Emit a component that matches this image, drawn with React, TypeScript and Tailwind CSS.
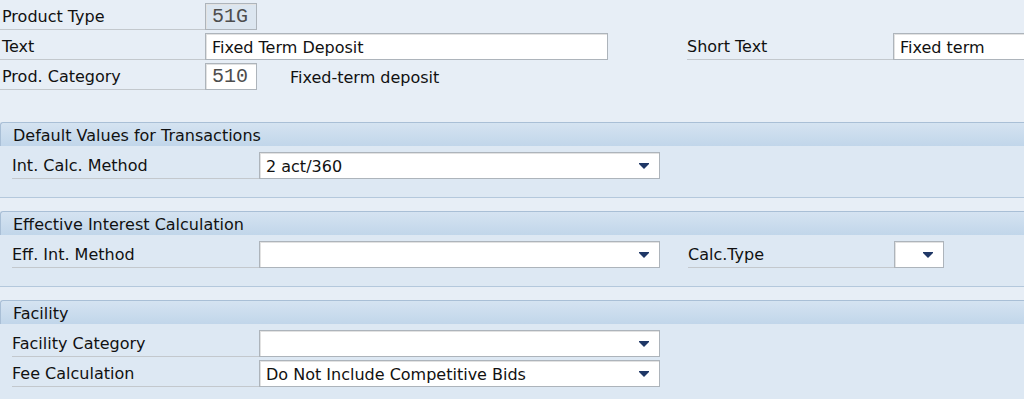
import React from 'react';

const font = { fontFamily: '"DejaVu Sans", Tahoma, Verdana, sans-serif' };

function Arrow() {
  return (
    <svg width="10" height="6" viewBox="0 0 10 6" className="shrink-0">
      <path d="M0 0 H10 V1 L5 6 L0 1 Z" fill="#1f3766" />
    </svg>
  );
}

function Field({ value = '', width, dropdown = false, mono = false, readOnly = false }: {
  value?: string;
  width: string;
  dropdown?: boolean;
  mono?: boolean;
  readOnly?: boolean;
}) {
  return (
    <div
      className={`${width} shrink-0 h-[27px] flex items-center border border-[#adb4bb] shadow-[inset_1px_1px_0_#e2e2e2] ${readOnly ? 'bg-[#dce6f0]' : 'bg-white'} pl-[6px] pr-[10px] overflow-hidden`}
    >
      <span
        className={`flex-1 whitespace-nowrap ${mono ? 'text-[20px] text-[#4d4d4d] leading-none pt-[1px]' : 'text-[16px] text-[#111] pt-[2px]'}`}
        style={mono ? { fontFamily: '"Liberation Mono", "Courier New", monospace' } : undefined}
      >
        {value}
      </span>
      {dropdown && <Arrow />}
    </div>
  );
}

function Label({ text, width, pad = '' }: { text: string; width: string; pad?: string }) {
  return (
    <div className={`${width} ${pad} shrink-0 h-[30px] flex items-center pt-[5px] border-b border-[#c3c8cd] text-[16px] text-[#111] whitespace-nowrap`}>
      {text}
    </div>
  );
}

function Section({ title, children }: { title: string; children: React.ReactNode }) {
  return (
    <div className="mb-[13px]">
      <div className="h-[24px] flex items-center pl-[12px] pt-[2px] border-t border-l border-[#a9bfd6] rounded-tl-[3px] bg-gradient-to-b from-[#d5e3f1] to-[#c1d6ea] text-[16px] text-[#111]">
        {title}
      </div>
      <div className="bg-[#dde8f3] border-b border-[#b4c8dc] pt-[3px] pb-[18px] flex flex-col">
        {children}
      </div>
    </div>
  );
}

export default function App() {
  return (
    <div className="w-[1024px] h-[399px] overflow-hidden bg-[#e7eef6]" style={font}>
      {/* header fields */}
      <div className="flex flex-col">
        <div className="flex items-end h-[30px]">
          <Label text="Product Type" width="w-[205px]" pad="pl-[2px]" />
          <Field value="51G" width="w-[52px]" mono readOnly />
        </div>
        <div className="flex items-end h-[30px]">
          <Label text="Text" width="w-[205px]" pad="pl-[2px]" />
          <Field value="Fixed Term Deposit" width="w-[403px]" />
          <div className="w-[79px] shrink-0" />
          <Label text="Short Text" width="w-[206px]" />
          <Field value="Fixed term" width="w-[140px]" />
        </div>
        <div className="flex items-end h-[30px]">
          <Label text="Prod. Category" width="w-[205px]" pad="pl-[2px]" />
          <Field value="510" width="w-[52px]" mono />
          <div className="pl-[33px] h-[27px] flex items-center pt-[2px] text-[16px] text-[#111]">Fixed-term deposit</div>
        </div>
      </div>

      <div className="h-[32px]" />

      <Section title="Default Values for Transactions">
        <div className="flex items-end h-[30px] pl-[12px]">
          <Label text="Int. Calc. Method" width="w-[247px]" />
          <Field value="2 act/360" width="w-[401px]" dropdown />
        </div>
      </Section>

      <Section title="Effective Interest Calculation">
        <div className="flex items-end h-[30px] pl-[12px]">
          <Label text="Eff. Int. Method" width="w-[247px]" />
          <Field width="w-[401px]" dropdown />
          <div className="w-[28px] shrink-0" />
          <Label text="Calc.Type" width="w-[206px]" />
          <Field width="w-[50px]" dropdown />
        </div>
      </Section>

      <Section title="Facility">
        <div className="flex items-end h-[30px] pl-[12px]">
          <Label text="Facility Category" width="w-[247px]" />
          <Field width="w-[401px]" dropdown />
        </div>
        <div className="flex items-end h-[30px] pl-[12px]">
          <Label text="Fee Calculation" width="w-[247px]" />
          <Field value="Do Not Include Competitive Bids" width="w-[401px]" dropdown />
        </div>
      </Section>
    </div>
  );
}
